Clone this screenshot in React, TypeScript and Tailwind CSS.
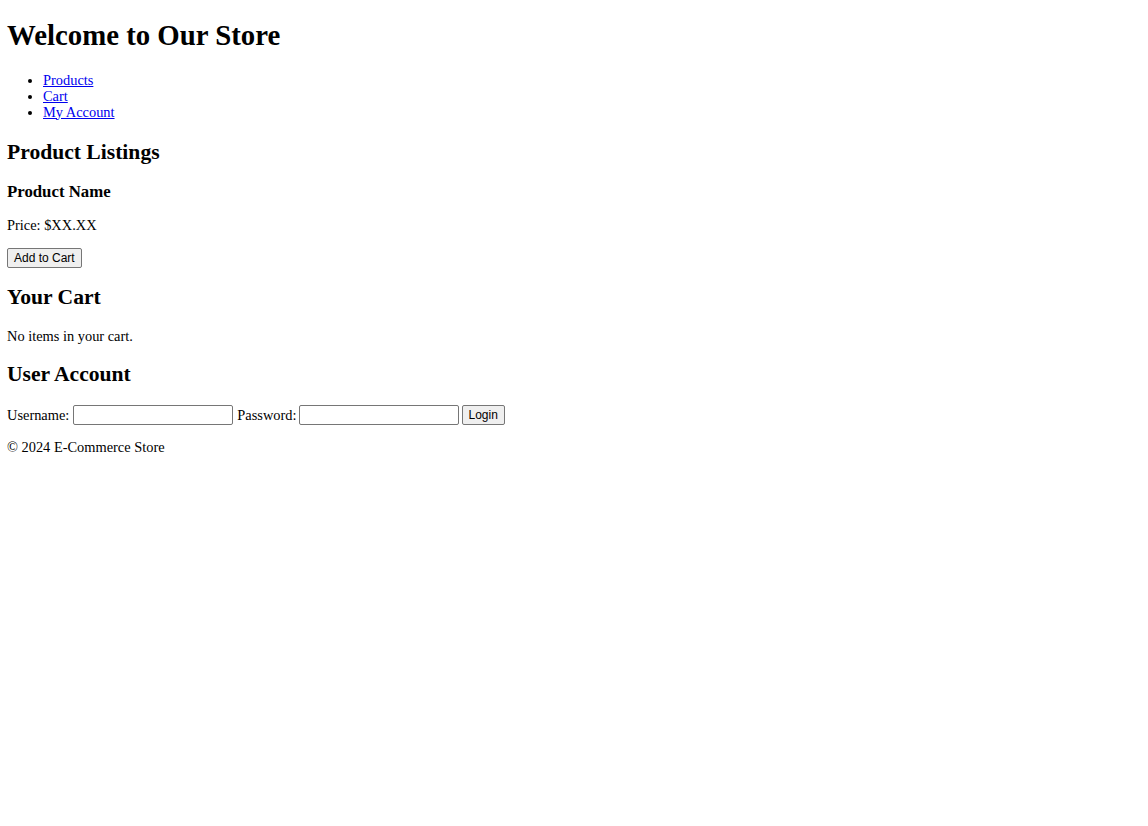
export default function App() {
  const btn =
    "h-[20px] rounded-[2px] border border-[#767676] bg-[#efefef] px-[6px] font-['Liberation_Sans',Arial,sans-serif] text-[12px] text-black";
  const input =
    "h-[20px] w-[160px] rounded-[2px] border border-[#767676] bg-white px-[2px] font-['Liberation_Sans',Arial,sans-serif] text-[12px]";

  return (
    <div className="m-[7px] font-['Liberation_Serif','Times_New_Roman',serif] text-[14.4px] leading-[16px] text-black">
      <header>
        <h1 className="my-[19.3px] text-[28.8px] leading-[normal] font-bold">Welcome to Our Store</h1>
        <nav>
          <ul className="my-[14.4px] list-disc pl-[36px]">
            <li>
              <a href="#products" className="text-[#0000ee] underline">Products</a>
            </li>
            <li>
              <a href="#cart" className="text-[#0000ee] underline">Cart</a>
            </li>
            <li>
              <a href="#account" className="text-[#0000ee] underline">My Account</a>
            </li>
          </ul>
        </nav>
      </header>
      <main>
        <section id="products">
          <h2 className="mt-[20px] mb-[17.9px] text-[21.6px] leading-[normal] font-bold">Product Listings</h2>
          <div>
            <h3 className="mt-[16px] mb-[15px] text-[16.8px] leading-[normal] font-bold">Product Name</h3>
            <p className="my-[14.4px]">Price: $XX.XX</p>
            <button className={btn}>Add to Cart</button>
          </div>
        </section>
        <section id="cart">
          <h2 className="mt-[17px] mb-[17.9px] text-[21.6px] leading-[normal] font-bold">Your Cart</h2>
          <p className="my-[14.4px]">No items in your cart.</p>
        </section>
        <section id="account">
          <h2 className="my-[17.9px] text-[21.6px] leading-[normal] font-bold">User Account</h2>
          <form onSubmit={(e) => e.preventDefault()} className="flex items-center gap-[4px]">
            <label htmlFor="username">Username:</label>
            <input id="username" type="text" className={input} />
            <label htmlFor="password">Password:</label>
            <input id="password" type="password" className={`${input} -ml-[2px]`} />
            <button type="submit" className={`${btn} -ml-[1px]`}>Login</button>
          </form>
        </section>
      </main>
      <footer>
        <p className="my-[14.4px]">© 2024 E-Commerce Store</p>
      </footer>
    </div>
  );
}
